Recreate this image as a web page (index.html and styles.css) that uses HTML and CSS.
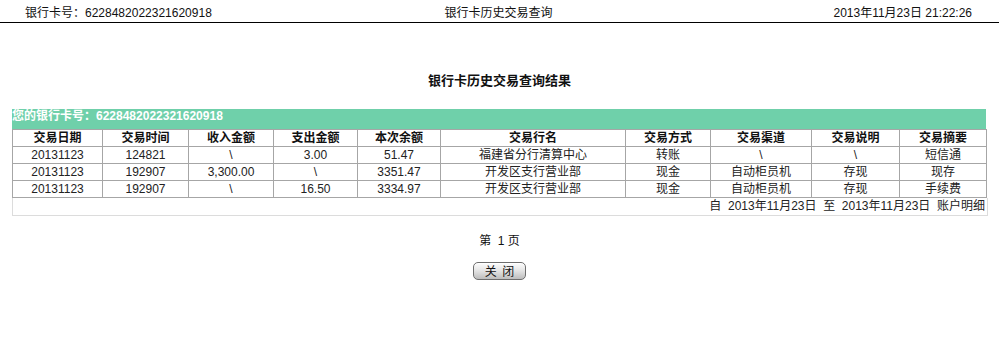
FILE: index.html
```html
<!DOCTYPE html>
<html>
<head>
<meta charset="utf-8">
<link rel="stylesheet" href="styles.css">
</head>
<body>
<div class="topbar">
  <span class="tb-left">银行卡号：6228482022321620918</span>
  <span class="tb-center">银行卡历史交易查询</span>
  <span class="tb-right">2013年11月23日 21:22:26</span>
</div>
<h1 class="title">银行卡历史交易查询结果</h1>
<div class="wrap">
  <div class="cardbar">您的银行卡号：6228482022321620918</div>
  <table class="grid">
    <colgroup>
      <col class="c1"><col class="c2"><col class="c3"><col class="c4"><col class="c5">
      <col class="c6"><col class="c7"><col class="c8"><col class="c9"><col class="c10">
    </colgroup>
    <thead>
      <tr>
        <th>交易日期</th><th>交易时间</th><th>收入金额</th><th>支出金额</th><th>本次余额</th>
        <th>交易行名</th><th>交易方式</th><th>交易渠道</th><th>交易说明</th><th>交易摘要</th>
      </tr>
    </thead>
    <tbody>
      <tr>
        <td>20131123</td><td>124821</td><td>\</td><td>3.00</td><td>51.47</td>
        <td>福建省分行清算中心</td><td>转账</td><td>\</td><td>\</td><td>短信通</td>
      </tr>
      <tr>
        <td>20131123</td><td>192907</td><td>3,300.00</td><td>\</td><td>3351.47</td>
        <td>开发区支行营业部</td><td>现金</td><td>自动柜员机</td><td>存现</td><td>现存</td>
      </tr>
      <tr>
        <td>20131123</td><td>192907</td><td>\</td><td>16.50</td><td>3334.97</td>
        <td>开发区支行营业部</td><td>现金</td><td>自动柜员机</td><td>存现</td><td>手续费</td>
      </tr>
    </tbody>
  </table>
  <div class="foot">自&nbsp; 2013年11月23日&nbsp; 至&nbsp; 2013年11月23日&nbsp; 账户明细</div>
</div>
<div class="pager">第&nbsp; 1 页</div>
<div class="btnrow"><button class="btn">关&nbsp; 闭</button></div>
</body>
</html>
```

FILE: styles.css
```css
html, body {
  margin: 0;
  padding: 0;
  background: #fff;
}
body {
  font-family: "Liberation Sans", "Noto Sans CJK SC", sans-serif;
  font-size: 12px;
  color: #222;
}
.topbar {
  display: flex;
  justify-content: space-between;
  align-items: flex-end;
  height: 22px;
  border-bottom: 1px solid #000;
  padding: 0 27px 0 25px;
  box-sizing: content-box;
}
.topbar span {
  line-height: 14px;
  padding-bottom: 2px;
  color: #111;
}
.tb-left, .tb-right {
  flex: 0 0 300px;
}
.tb-right {
  text-align: right;
}
.tb-center {
  flex: 1;
  text-align: center;
}
.title {
  margin: 49px 0 0 0;
  font-size: 13px;
  font-weight: bold;
  text-align: center;
  line-height: 18px;
  color: #111;
}
.wrap {
  margin: 19px 13px 0 12px;
}
.cardbar {
  background: #6fd0aa;
  color: #fff;
  font-weight: bold;
  font-size: 12px;
  line-height: 14px;
  height: 20px;
  padding-left: 0;
}
.grid {
  width: 974px;
  border-collapse: collapse;
  table-layout: fixed;
}
.grid th, .grid td {
  border: 1px solid #a6a6a6;
  text-align: center;
  height: 16px;
  padding: 0;
  line-height: 15px;
  white-space: nowrap;
}
.grid th {
  font-weight: bold;
  color: #111;
}
.c1 { width: 90px; }
.c2 { width: 86px; }
.c3 { width: 85px; }
.c4 { width: 84px; }
.c5 { width: 83px; }
.c6 { width: 185px; }
.c7 { width: 85px; }
.c8 { width: 101px; }
.c9 { width: 88px; }
.c10 { width: 87px; }
.foot {
  width: 972px;
  border: 1px solid #dcdcdc;
  border-top: none;
  height: 17px;
  line-height: 17px;
  text-align: right;
  padding-right: 2px;
  box-sizing: content-box;
  color: #222;
}
.pager {
  text-align: center;
  margin-top: 17px;
  line-height: 16px;
  color: #111;
}
.btnrow {
  text-align: center;
  margin-top: 13px;
}
.btn {
  width: 53px;
  height: 18px;
  padding: 0;
  font-family: "Noto Sans CJK SC", sans-serif;
  font-size: 12px;
  line-height: 14px;
  color: #111;
  border: 1px solid #6e6e6e;
  border-radius: 5px;
  background: linear-gradient(#fdfdfd 0%, #e6e6e6 45%, #bdbdbd 100%);
  box-shadow: inset 0 1px 0 #fff;
}
```
